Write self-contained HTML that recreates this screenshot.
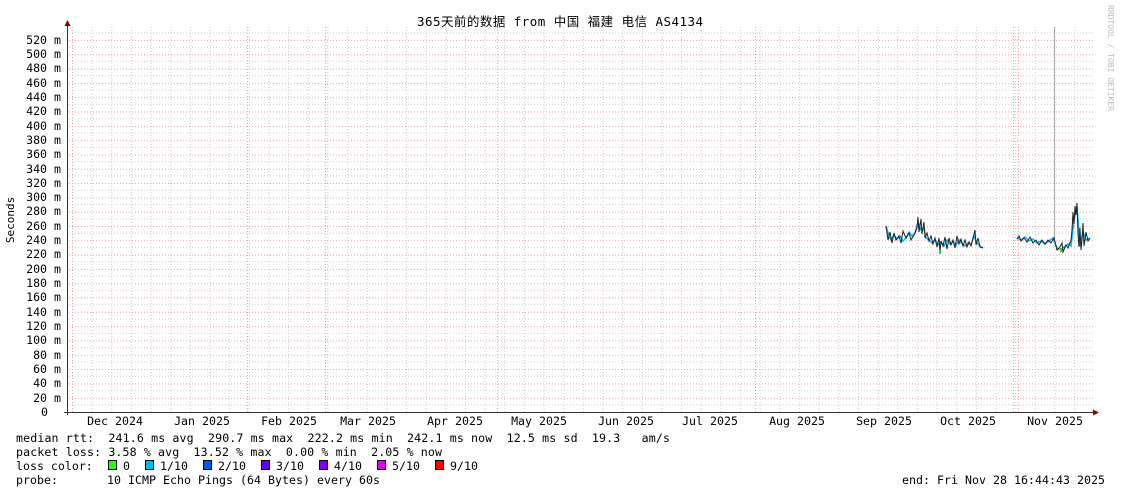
<!DOCTYPE html>
<html><head><meta charset="utf-8"><style>
html,body{margin:0;padding:0;background:#fff;}
svg{display:block;}
text{font-family:"DejaVu Sans Mono","Liberation Mono","Noto Sans CJK SC",monospace;font-size:11.6px;fill:#000;}
</style></head><body>
<svg width="1121" height="494" xmlns="http://www.w3.org/2000/svg">
<defs>
<pattern id="hg" patternUnits="userSpaceOnUse" x="0" y="412" width="1121" height="14.308">
<line x1="0" y1="7.154" x2="1121" y2="7.154" stroke="#ccc" stroke-width="1" stroke-dasharray="1,2"/>
<line x1="0" y1="0.5" x2="1121" y2="0.5" stroke="#f0a0a0" stroke-width="1" stroke-dasharray="1,2"/>
</pattern>
<pattern id="vg" patternUnits="userSpaceOnUse" x="72" y="0" width="19.65" height="494">
<line x1="0.5" y1="0" x2="0.5" y2="494" stroke="#ccc" stroke-width="1" stroke-dasharray="1,2"/>
</pattern>
</defs>
<rect width="1121" height="494" fill="#fff"/>
<rect x="68" y="27" width="1025" height="385" fill="url(#vg)"/>
<rect x="68" y="27" width="1025" height="385" fill="url(#hg)"/>
<g stroke="#f2a0a0" stroke-width="1" stroke-dasharray="1,2">
<line x1="72.5" y1="27" x2="72.5" y2="412"/><line x1="247.5" y1="27" x2="247.5" y2="412"/>
<line x1="325.5" y1="27" x2="325.5" y2="412"/><line x1="497.5" y1="27" x2="497.5" y2="412"/>
<line x1="755.5" y1="27" x2="755.5" y2="412"/><line x1="1013.5" y1="27" x2="1013.5" y2="412"/>
<line x1="1018.5" y1="27" x2="1018.5" y2="412"/>
</g>
<line x1="1054.5" y1="27" x2="1054.5" y2="240" stroke="#aaa"/>
<line x1="67.5" y1="24" x2="67.5" y2="415" stroke="#333"/>
<line x1="64" y1="412.5" x2="1095" y2="412.5" stroke="#333"/>
<polygon points="64.5,26 70.5,26 67.5,20" fill="#800"/>
<polygon points="1093,409.5 1093,415.5 1099,412.5" fill="#800"/>
<g text-anchor="end" style="font-size:11px">
<text x="61" y="44">520 m</text><text x="61" y="58">500 m</text><text x="61" y="72">480 m</text><text x="61" y="87">460 m</text><text x="61" y="101">440 m</text><text x="61" y="115">420 m</text><text x="61" y="130">400 m</text><text x="61" y="144">380 m</text><text x="61" y="158">360 m</text><text x="61" y="173">340 m</text><text x="61" y="187">320 m</text><text x="61" y="201">300 m</text><text x="61" y="215">280 m</text><text x="61" y="230">260 m</text><text x="61" y="244">240 m</text><text x="61" y="258">220 m</text><text x="61" y="273">200 m</text><text x="61" y="287">180 m</text><text x="61" y="301">160 m</text><text x="61" y="316">140 m</text><text x="61" y="330">120 m</text><text x="61" y="344">100 m</text><text x="61" y="359">80 m</text><text x="61" y="373">60 m</text><text x="61" y="387">40 m</text><text x="61" y="402">20 m</text><text x="48" y="416">0</text>
</g>
<text x="14" y="220" transform="rotate(-90 14 220)" text-anchor="middle" style="font-size:11px">Seconds</text>
<text x="417" y="26" textLength="286" lengthAdjust="spacing" style="font-size:12.5px">365天前的数据 from 中国 福建 电信 AS4134</text>
<text x="1108" y="5" transform="rotate(90 1108 5)" style="font-size:8px;fill:#bbb">RRDTOOL / TOBI OETIKER</text>
<g text-anchor="middle" style="font-size:10px">
<text x="115" y="425">Dec 2024</text><text x="202" y="425">Jan 2025</text><text x="289" y="425">Feb 2025</text><text x="368" y="425">Mar 2025</text><text x="455" y="425">Apr 2025</text><text x="539" y="425">May 2025</text><text x="626" y="425">Jun 2025</text><text x="710" y="425">Jul 2025</text><text x="797" y="425">Aug 2025</text><text x="884" y="425">Sep 2025</text><text x="968" y="425">Oct 2025</text><text x="1055" y="425">Nov 2025</text>
</g>
<g fill="none" stroke-width="1.5">
<polyline stroke="#00b4ff" points="886,226 889,236 891,240 894,235 897,239 900,236 903,241 906,238 909,232 912,236 915,233 918,222 921,230 924,228 926,238 929,240 932,243 935,240 938,245 941,242 944,246 947,240 950,244 953,242 956,245 959,240 962,244 965,246 968,243 971,245 974,236 977,243 980,246 983,248"/>
<polyline stroke="#00b4ff" points="1017,238 1021,240 1025,237 1029,241 1033,239 1037,243 1041,241 1045,244 1049,241 1053,238 1057,248 1061,250 1064,247 1068,244 1071,246 1074,220 1077,206 1080,246 1083,232 1086,240 1090,238"/>
<polyline stroke="#222" stroke-width="1" points="886,226 888,240 890,232 892,243 894,233 896,240 899,236 901,243 903,231 906,238 909,233 911,240 914,235 917,228 918,217 919,232 921,219 922,234 924,222 925,238 927,233 929,241 931,236 933,244 935,238 937,247 939,238 940,252 941,241 943,246 945,237 947,249 949,238 951,245 953,240 955,248 957,236 959,244 961,239 963,246 965,240 967,247 969,242 971,246 973,238 975,230 976,245 978,238 980,247 983,248"/>
<polyline stroke="#222" stroke-width="1" points="1017,239 1019,236 1021,241 1024,238 1027,242 1030,237 1033,243 1036,240 1039,245 1042,240 1045,244 1048,240 1051,243 1054,238 1057,250 1060,247 1062,243 1063,252 1066,245 1068,248 1071,240 1072,230 1073,212 1074,224 1075,206 1076,215 1077,203 1078,234 1079,247 1080,228 1081,250 1082,240 1083,223 1084,246 1086,232 1088,241 1090,238"/>
</g>
<rect x="939" y="250" width="2" height="4" fill="#2d2"/><rect x="1060" y="248" width="2" height="4" fill="#2d2"/>
<text x="16" y="442" xml:space="preserve" textLength="654" lengthAdjust="spacing">median rtt:  241.6 ms avg  290.7 ms max  222.2 ms min  242.1 ms now  12.5 ms sd  19.3   am/s</text>
<text x="16" y="456" xml:space="preserve" textLength="426" lengthAdjust="spacing">packet loss: 3.58 % avg  13.52 % max  0.00 % min  2.05 % now</text>
<text x="16" y="470" xml:space="preserve">loss color:</text>
<g stroke="#000" stroke-width="1">
<rect x="108.5" y="460.5" width="8" height="9" fill="#26ff00"/>
<rect x="145.5" y="460.5" width="8" height="9" fill="#00b8ff"/>
<rect x="203.5" y="460.5" width="8" height="9" fill="#0059ff"/>
<rect x="261.5" y="460.5" width="8" height="9" fill="#5e00ff"/>
<rect x="319.5" y="460.5" width="8" height="9" fill="#7e00ff"/>
<rect x="377.5" y="460.5" width="8" height="9" fill="#dd00ff"/>
<rect x="435.5" y="460.5" width="8" height="9" fill="#ff0000"/>
</g>
<text x="123" y="470">0</text><text x="160" y="470">1/10</text><text x="218" y="470">2/10</text><text x="276" y="470">3/10</text><text x="334" y="470">4/10</text><text x="392" y="470">5/10</text><text x="450" y="470">9/10</text>
<text x="16" y="484" xml:space="preserve" textLength="364" lengthAdjust="spacing">probe:       10 ICMP Echo Pings (64 Bytes) every 60s</text>
<text x="902" y="484" textLength="203" lengthAdjust="spacing">end: Fri Nov 28 16:44:43 2025</text>
</svg>
</body></html>
